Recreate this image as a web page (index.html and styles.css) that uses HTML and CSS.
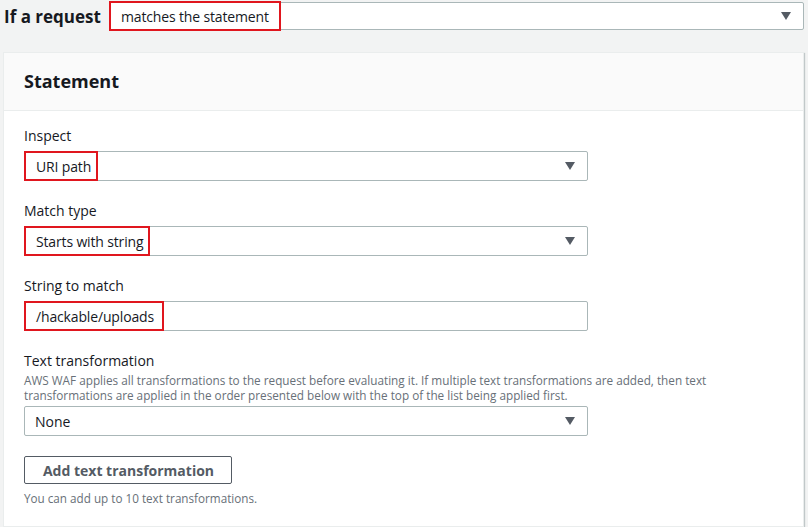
FILE: index.html
```html
<!DOCTYPE html>
<html>
<head>
<meta charset="utf-8">
<link rel="stylesheet" href="styles.css">
</head>
<body>
<div class="top">
  <div class="top-label">If a request</div>
  <div class="select select-top">
    <span class="hl hl-top">matches the statement</span>
    <span class="caret"></span>
  </div>
</div>
<div class="card">
  <div class="card-header">Statement</div>
  <div class="card-body">
    <div class="field">
      <div class="label">Inspect</div>
      <div class="select">
        <span class="hl">URI path</span>
        <span class="caret"></span>
      </div>
    </div>
    <div class="field">
      <div class="label">Match type</div>
      <div class="select">
        <span class="hl">Starts with string</span>
        <span class="caret"></span>
      </div>
    </div>
    <div class="field">
      <div class="label">String to match</div>
      <div class="select">
        <span class="hl hl-input">/hackable/uploads</span>
      </div>
    </div>
    <div class="field">
      <div class="label">Text transformation</div>
      <div class="desc">AWS WAF applies all transformations to the request before evaluating it. If multiple text transformations are added, then text transformations are applied in the order presented below with the top of the list being applied first.</div>
      <div class="select">
        <span class="plain">None</span>
        <span class="caret"></span>
      </div>
    </div>
    <button class="btn">Add text transformation</button>
    <div class="hint">You can add up to 10 text transformations.</div>
  </div>
</div>
</body>
</html>
```

FILE: styles.css
```css
* { box-sizing: border-box; }
html, body { margin: 0; padding: 0; }
body {
  background: #f2f3f3;
  font-family: "Open Sans", "Noto Sans", sans-serif;
  color: #16191f;
  width: 808px;
  height: 527px;
  overflow: hidden;
}
.top {
  display: flex;
  align-items: center;
  height: 32px;
  padding-left: 4px;
}
.top-label {
  font-weight: 700;
  font-size: 17px;
  width: 105px;
}
.select {
  display: flex;
  align-items: stretch;
  height: 30px;
  width: 564px;
  background: #fff;
  border: 1px solid #aab7b8;
  border-radius: 2px;
  font-size: 14px;
}
.select-top {
  width: 695px;
  height: 28px;
}
.hl {
  display: flex;
  align-items: center;
  margin: -1px 0 -1px -1px;
  border: 2px solid #e0161e;
  padding: 0 5px 0 10px;
  color: #16191f;
  letter-spacing: -0.15px;
}
.hl-top {
  margin: -2px 0 -2px -1px;
  padding-right: 10px;
}
.hl-input { padding-right: 8px; }
.plain {
  display: flex;
  align-items: center;
  padding-left: 10px;
}
.caret {
  margin-left: auto;
  margin-right: 12px;
  align-self: center;
  width: 0;
  height: 0;
  border-left: 5.5px solid transparent;
  border-right: 5.5px solid transparent;
  border-top: 8px solid #545b64;
}
.card {
  margin: 20px 4px 0 3px;
  background: #fff;
  border: 1px solid #eaeded;
  box-shadow: 1px 1px 1px rgba(0,28,36,0.2);
  height: 475px;
}
.card-header {
  height: 58px;
  background: #fafafa;
  border-bottom: 1px solid #eaeded;
  display: flex;
  align-items: center;
  padding-left: 20px;
  padding-bottom: 2px;
  font-size: 18px;
  font-weight: 700;
}
.card-body {
  padding: 15px 20px 0 20px;
}
.field { margin-bottom: 20px; }
.label {
  font-size: 14px;
  line-height: 20px;
  margin-bottom: 5px;
}
.desc {
  font-size: 11.75px;
  line-height: 15px;
  color: #687078;
  margin-top: -3px;
  margin-bottom: 3px;
  width: 740px;
}
.btn {
  display: block;
  margin-top: 1px;
  width: 208px;
  height: 28px;
  background: #fff;
  border: 1px solid #545b64;
  border-radius: 2px;
  font-family: inherit;
  font-size: 14px;
  font-weight: 700;
  color: #545b64;
  padding: 0 0 0 1px;
  line-height: 28px;
}
.hint {
  font-size: 11.7px;
  line-height: 15px;
  color: #687078;
  margin-top: 7px;
}
```
